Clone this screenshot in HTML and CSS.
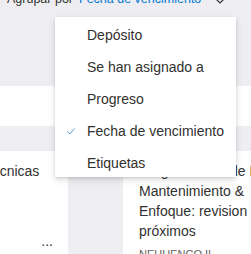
FILE: index.html
```html
<!DOCTYPE html>
<html lang="es">
<head>
    <meta charset="UTF-8">
    <meta name="viewport" content="width=device-width, initial-scale=1.0">
    <title>Planner - Agrupar por</title>
    <link rel="stylesheet" href="styles.css">
</head>
<body>
    <div class="toolbar">
        <div class="groupby">
            <span class="label">Agrupar por</span>
            <span class="value">Fecha de vencimiento</span>
            <svg class="chevron" width="10" height="6" viewBox="0 0 10 6"><path d="M1 1 L5 5 L9 1" fill="none" stroke="#323130" stroke-width="1.2"/></svg>
        </div>
    </div>

    <div class="board">
        <div class="column col-left">
            <div class="add-task"></div>
            <div class="card">
                <div class="title">técnicas</div>
                <div class="card-footer"><span class="more">...</span></div>
            </div>
        </div>
        <div class="column col-right">
            <div class="add-task"></div>
            <div class="card">
                <div class="title">Programación de Pruebas<br>Mantenimiento &amp;<br>Enfoque: revision de<br>próximos</div>
                <div class="bucket">NEHUENCO II</div>
            </div>
        </div>
    </div>

    <ul class="menu">
        <li>Depósito</li>
        <li>Se han asignado a</li>
        <li>Progreso</li>
        <li class="checked">
            <svg class="check" width="8" height="7" viewBox="0 0 8 7"><path d="M0.5 3.5 L2.8 6 L7.5 0.5" fill="none" stroke="#5b9bd8" stroke-width="1"/></svg>
            Fecha de vencimiento
        </li>
        <li>Etiquetas</li>
    </ul>
</body>
</html>
```

FILE: styles.css
```css
body { margin: 0; background: #eeeef2; font-family: "Segoe UI", "Liberation Sans", Arial, sans-serif; color: #323130; overflow: hidden; height: 254px; }

.toolbar { height: 86px; display: flex; align-items: flex-start; }
.groupby { display: flex; align-items: center; margin-top: -10px; padding-left: 7px; font-size: 12.5px; line-height: 18px; height: 18px; }
.groupby .value { color: #0078d4; margin-left: 6px; }
.groupby .chevron { margin-left: 14px; margin-top: 4px; }

.board { display: flex; gap: 55px; margin-left: -28px; }
.column { flex: none; }
.col-left { width: 96px; }
.col-right { width: 200px; }
.add-task { height: 40px; background: #fff; margin-bottom: 25px; }
.card { background: #fff; padding: 10px 16px 20px 16px; font-size: 14px; line-height: 20px; }
.col-left .card { padding-right: 15px; }
.card-footer { display: flex; justify-content: flex-end; margin-top: 50px; }
.more { line-height: 20px; }
.bucket { font-size: 11px; color: #605e5c; line-height: 16px; margin-top: 5px; }

.menu { position: absolute; left: 55px; top: 17px; width: 181px; height: 160px; margin: 0; padding: 2px 0 0 0; list-style: none; background: #fff; box-shadow: 0 3px 7px rgba(0,0,0,0.13), 0 0.6px 2px rgba(0,0,0,0.11); font-size: 14px; box-sizing: border-box; }
.menu li { height: 32px; line-height: 32px; padding-left: 32px; position: relative; white-space: nowrap; }
.menu .check { position: absolute; left: 12px; top: 13px; }
```
